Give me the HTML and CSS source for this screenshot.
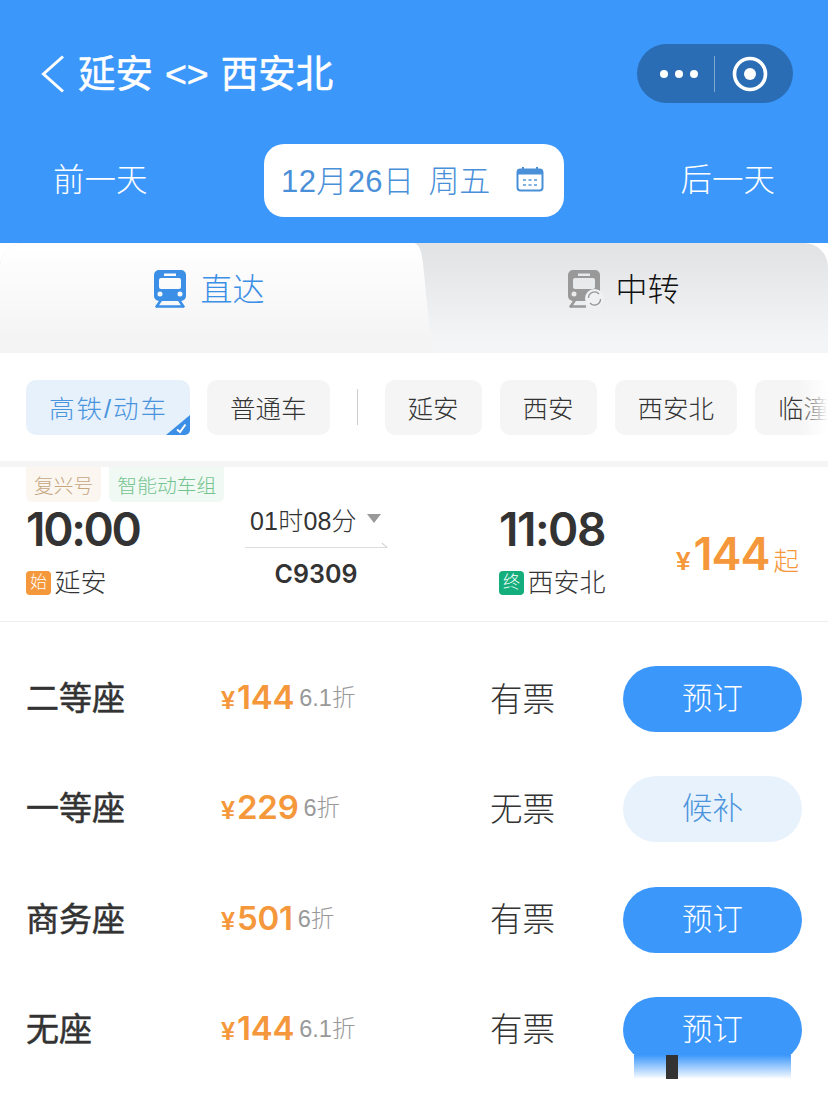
FILE: index.html
```html
<!DOCTYPE html>
<html lang="zh-CN">
<head>
<meta charset="utf-8">
<title>延安 &lt;&gt; 西安北</title>
<link rel="stylesheet" href="styles.css">
</head>
<body>
<div class="page">
  <header class="head">
    <div class="nav">
      <svg class="back" width="24" height="38" viewBox="0 0 24 38"><path d="M22 1.500 L2.500 19 L22 36.500" fill="none" stroke="#fff" stroke-width="3"/></svg>
      <h1 class="title">延安 &lt;&gt; 西安北</h1>
      <div class="capsule">
        <svg class="cap-dots" width="46" height="10" viewBox="0 0 46 10"><circle cx="5" cy="5" r="4" fill="#fff"/><circle cx="20" cy="5" r="4" fill="#fff"/><circle cx="35" cy="5" r="4" fill="#fff"/></svg>
        <span class="cap-line"></span>
        <svg class="cap-ring" width="36" height="36" viewBox="0 0 36 36"><circle cx="18" cy="18" r="15.500" fill="none" stroke="#fff" stroke-width="3.600"/><circle cx="18" cy="18" r="6" fill="#fff"/></svg>
      </div>
    </div>
    <div class="dates">
      <span class="day">前一天</span>
      <div class="date-pill">
        <span class="date-text">12月26日</span>
        <span class="date-week">周五</span>
        <svg class="cal" width="28" height="26" viewBox="0 0 28 26"><path d="M7 1v4M21 1v4" stroke="#4a90d9" stroke-width="2"/><rect x="1.500" y="3.500" width="25" height="21" rx="3" fill="none" stroke="#4a90d9" stroke-width="2"/><rect x="1.500" y="3.500" width="25" height="5" fill="#4a90d9"/><path d="M7 14h3M12.500 14h3M18 14h3M7 19h3M12.500 19h3M18 19h3" stroke="#7fb0e4" stroke-width="2.200"/></svg>
      </div>
      <span class="day">后一天</span>
    </div>
  </header>

  <div class="tabs">
    <div class="tab tab-on">
      <svg width="34" height="38" viewBox="0 0 34 38"><path fill-rule="evenodd" fill="#3c8fe6" d="M6 0h22a5 5 0 0 1 5 5v21a5 5 0 0 1-5 5H6a5 5 0 0 1-5-5V5a5 5 0 0 1 5-5zM11 3.500v2.500h12V3.500zM8 8a2 2 0 0 0-2 2v7a2 2 0 0 0 2 2h18a2 2 0 0 0 2-2v-7a2 2 0 0 0-2-2zM7 21.500a2.500 2.500 0 1 0 0 5a2.500 2.500 0 0 0 0-5zM27 21.500a2.500 2.500 0 1 0 0 5a2.500 2.500 0 0 0 0-5z"/><path fill="none" stroke="#3c8fe6" stroke-width="2.600" d="M8 30 L3 37.500M26 30 L31 37.500M3 36.500H31"/></svg>
      <span class="tab-blue">直达</span>
    </div>
    <div class="tab tab-off">
      <svg width="36" height="38" viewBox="0 0 36 38"><path fill-rule="evenodd" fill="#999" d="M5 0h22a5 5 0 0 1 5 5v21a5 5 0 0 1-5 5H5a5 5 0 0 1-5-5V5a5 5 0 0 1 5-5zM10 3.500v2.500h12V3.500zM7 8a2 2 0 0 0-2 2v7a2 2 0 0 0 2 2h18a2 2 0 0 0 2-2v-7a2 2 0 0 0-2-2zM6 21.500a2.500 2.500 0 1 0 0 5a2.500 2.500 0 0 0 0-5z"/><path fill="none" stroke="#999" stroke-width="2.600" d="M7 30 L2 37.500M2 36.500H18"/><circle cx="26.500" cy="28.500" r="9.500" fill="#f0f1f2"/><path fill="none" stroke="#999" stroke-width="1.400" d="M20.500 28a6 6 0 0 1 10.500-4M32.500 29a6 6 0 0 1-10.500 4"/></svg>
      <span>中转</span>
    </div>
  </div>

  <div class="filters">
    <span class="chip chip-on">高铁/动车<svg class="chip-tick" width="24" height="20" viewBox="0 0 24 20"><path d="M0 20 L24 0 V15 a5 5 0 0 1-5 5z" fill="#3c8fe6"/><path d="M11 14.500 L14 17 L19.500 9.500" fill="none" stroke="#fff" stroke-width="2"/></svg></span>
    <span class="chip">普通车</span>
    <span class="chip-sep"></span>
    <span class="chip">延安</span>
    <span class="chip">西安</span>
    <span class="chip">西安北</span>
    <span class="chip">临潼</span>
    <span class="fade"></span>
  </div>

  <section class="train">
    <div class="tags">
      <span class="tag tag-a">复兴号</span>
      <span class="tag tag-b">智能动车组</span>
    </div>
    <div class="train-row">
      <div class="stop stop-from">
        <div class="time time-tight">10:00</div>
        <div class="station"><span class="mark mark-o">始</span>延安</div>
      </div>
      <div class="mid">
        <div class="dur">01时08分<span class="caret"></span></div>
        <div class="arrow"></div>
        <div class="code">C9309</div>
      </div>
      <div class="stop stop-to">
        <div class="time">11:08</div>
        <div class="station"><span class="mark mark-g">终</span>西安北</div>
      </div>
      <div class="from-price"><span class="y">¥</span><span class="n">144</span><span class="q">起</span></div>
    </div>
  </section>

  <section class="seats">
    <div class="seat">
      <span class="seat-name">二等座</span>
      <span class="seat-price"><span class="y">¥</span><span class="n">144</span><span class="off">6.1折</span></span>
      <span class="seat-state">有票</span>
      <span class="btn">预订</span>
    </div>
    <div class="seat">
      <span class="seat-name">一等座</span>
      <span class="seat-price"><span class="y">¥</span><span class="n">229</span><span class="off">6折</span></span>
      <span class="seat-state">无票</span>
      <span class="btn btn-soft">候补</span>
    </div>
    <div class="seat">
      <span class="seat-name">商务座</span>
      <span class="seat-price"><span class="y">¥</span><span class="n">501</span><span class="off">6折</span></span>
      <span class="seat-state">有票</span>
      <span class="btn">预订</span>
    </div>
    <div class="seat">
      <span class="seat-name">无座</span>
      <span class="seat-price"><span class="y">¥</span><span class="n">144</span><span class="off">6.1折</span></span>
      <span class="seat-state">有票</span>
      <span class="btn btn-cut">预订</span>
    </div>
  </section>
</div>
</body>
</html>
```

FILE: styles.css
```css
* { box-sizing: border-box; }
html, body { margin: 0; padding: 0; background: #fff; }
body {
  font-family: "Liberation Sans", "Noto Sans CJK SC", sans-serif;
  color: #333;
}
.page { width: 828px; height: 1097px; overflow: hidden; }

/* header */
.head { background: #3c97fb; height: 243px; padding-top: 44px; }
.nav { display: flex; align-items: center; height: 59px; padding: 0 35px 0 41px; }
.back { flex: none; margin-right: 13px; }
.title {
  flex: 1; margin: 0; padding-top: 2px; font-size: 37.500px; font-weight: 400; color: #fff;
  -webkit-text-stroke: .5px #fff; line-height: 57px; white-space: nowrap; word-spacing: 1.500px;
}
.capsule {
  flex: none; width: 156px; height: 59px; border-radius: 30px; background: #2a6db5;
  display: flex; align-items: center; padding-left: 22px;
}
.cap-line { width: 1px; height: 36px; background: rgba(255,255,255,.4); margin: 0 17px 0 9px; }
.dates { display: flex; justify-content: space-between; align-items: center; margin-top: 41px; padding: 0 53px; }
.day { color: #fff; font-size: 31.500px; line-height: 73px; font-weight: 300; }
.date-pill {
  width: 300px; height: 73px; border-radius: 20px; background: #fff; color: #4a90d9;
  display: flex; align-items: center; padding: 0 0 4px 17px; font-size: 31px; font-weight: 300;
}
.date-text { letter-spacing: .4px; }
.date-week { margin-left: 14px; }
.cal { margin-left: 26px; }

/* tabs */
.tabs { display: flex; height: 110px; background: linear-gradient(#e1e2e4, #f4f5f6 90%); border-radius: 24px 24px 0 0; }
.tab { width: 50%; display: flex; align-items: center; justify-content: center; gap: 13px; font-size: 32px; font-weight: 300; color: #111; padding-bottom: 19px; }
.tab span { margin-bottom: 4px; }
.tab-on {
  position: relative; z-index: 1; background: linear-gradient(#fff, #f4f4f5 90%);
  border-radius: 24px 0 0 0; padding-left: 4px;
}
.tab-on::after {
  content: ""; position: absolute; left: 100%; top: 0; width: 20px; height: 110px;
  background: linear-gradient(#fff, #f4f4f5 90%);
  clip-path: path("M0 0 C6 2 8 8 10 30 L16 90 L20 110 L0 110 Z");
}
.tab-off { padding-left: 6px; gap: 11px; }
.tab-blue { color: #3c8fe6; }

/* filters */
.filters {
  position: relative; display: flex; align-items: center; gap: 18px;
  height: 108px; padding-left: 26px; white-space: nowrap; overflow: hidden;
}
.chip {
  position: relative; flex: none; height: 55px; line-height: 59px; padding: 0 23px;
  background: #f5f5f6; border-radius: 10px; font-size: 25.500px; font-weight: 300; color: #333;
}
.chip-on { width: 164px; margin-right: -1px; background: #e6f1fc; color: #4a94dc; letter-spacing: 2px; }
.chip-tick { position: absolute; right: 0; bottom: 0; }
.chip-sep { flex: none; width: 1px; height: 36px; background: #ccc; margin: 0 9px; }
.fade { position: absolute; right: 0; top: 0; width: 30px; height: 100%; background: linear-gradient(90deg, rgba(255,255,255,0), #fff); }

/* train */
.train { border-top: 6px solid #f5f5f5; border-bottom: 1px solid #eee; height: 161px; padding-left: 26px; }
.tags { display: flex; gap: 8px; height: 35px; }
.tag { height: 35px; line-height: 38px; padding: 0 8px; font-size: 19.800px; font-weight: 300; border-radius: 0 0 6px 6px; }
.tag-a { background: #fbf6f0; color: #c6a67f; }
.tag-b { background: #f0f9f3; color: #74c48f; }
.train-row { display: flex; }
.stop-from { width: 219px; }
.stop-to { width: 177px; margin-left: 112px; }
.time { font-family: "Inter", "Liberation Sans", sans-serif; font-size: 46px; font-weight: 600; letter-spacing: -1.500px; line-height: 54px; color: #333; }
.time-tight { letter-spacing: -2.300px; }
.station { display: flex; align-items: center; gap: 3.500px; font-size: 26px; font-weight: 300; line-height: 30px; margin-top: 12px; color: #333; }
.mark { width: 25px; height: 24px; line-height: 24px; border-radius: 4px; color: #fff; font-size: 17px; text-align: center; }
.mark-o { background: #f5973b; }
.mark-g { background: #14ae7c; }
.mid { width: 142px; text-align: center; }
.dur { font-size: 25px; font-weight: 300; line-height: 40px; margin-top: -1px; letter-spacing: .2px; display: flex; align-items: center; padding-left: 5px; white-space: nowrap; }
.caret { width: 0; height: 0; margin: -6px 0 0 10px; border: 7.500px solid transparent; border-top: 9px solid #999; border-bottom: 0; }
.arrow { position: relative; height: 1px; background: #ddd; margin-top: 6px; }
.arrow::after { content: ""; position: absolute; right: 0; bottom: 0; width: 7px; height: 1px; background: #ccc; transform: rotate(40deg); transform-origin: right bottom; }
.code { font-family: "Inter", "Liberation Sans", sans-serif; font-size: 25px; font-weight: 600; line-height: 32px; margin-top: 10px; color: #333; }
.from-price { color: #f5973b; margin-top: 24px; white-space: nowrap; line-height: 56px; }
.from-price .y { font-size: 26px; font-weight: 700; margin-right: 3px; }
.from-price .n { font-family: "Inter", "Liberation Sans", sans-serif; font-size: 45px; font-weight: 600; letter-spacing: -1px; }
.from-price .q { font-size: 25.500px; font-weight: 300; margin-left: 4px; }

/* seats */
.seats { padding: 44px 26px 0; display: flex; flex-direction: column; gap: 44.300px; }
.seat { display: flex; align-items: center; height: 66px; }
.seat-name { width: 195px; margin-bottom: 6px; font-size: 33px; font-weight: 400; color: #333; -webkit-text-stroke: .5px #333; }
.seat-price { width: 270px; margin-bottom: 4px; display: flex; align-items: baseline; color: #f5973b; white-space: nowrap; }
.seat-price .y { font-size: 25px; font-weight: 700; margin-right: 2px; }
.seat-price .n { font-family: "Inter", "Liberation Sans", sans-serif; font-size: 33px; font-weight: 600; letter-spacing: -.2px; }
.off { font-size: 23.500px; font-weight: 300; color: #999; margin-left: 5px; transform: translateY(-3px); }
.seat-state { width: 132px; margin-bottom: 6px; font-size: 32.500px; font-weight: 300; color: #333; margin-left: -1px; margin-right: 1px; }
.btn {
  position: relative; width: 179px; height: 66px; line-height: 64px; border-radius: 33px;
  background: #3c97fb; color: #fff; font-size: 30.500px; font-weight: 300; text-align: center;
}
.btn-soft { background: #e8f2fc; color: #4a94dc; }
.btn-cut::after {
  content: ""; position: absolute; left: 11px; right: 11px; top: 58px; height: 24px;
  background:
    linear-gradient(90deg, transparent 32px, #333 32px, #333 44px, transparent 44px),
    linear-gradient(#3c97fb, #e9f3fe 90%, #fff);
}
```
